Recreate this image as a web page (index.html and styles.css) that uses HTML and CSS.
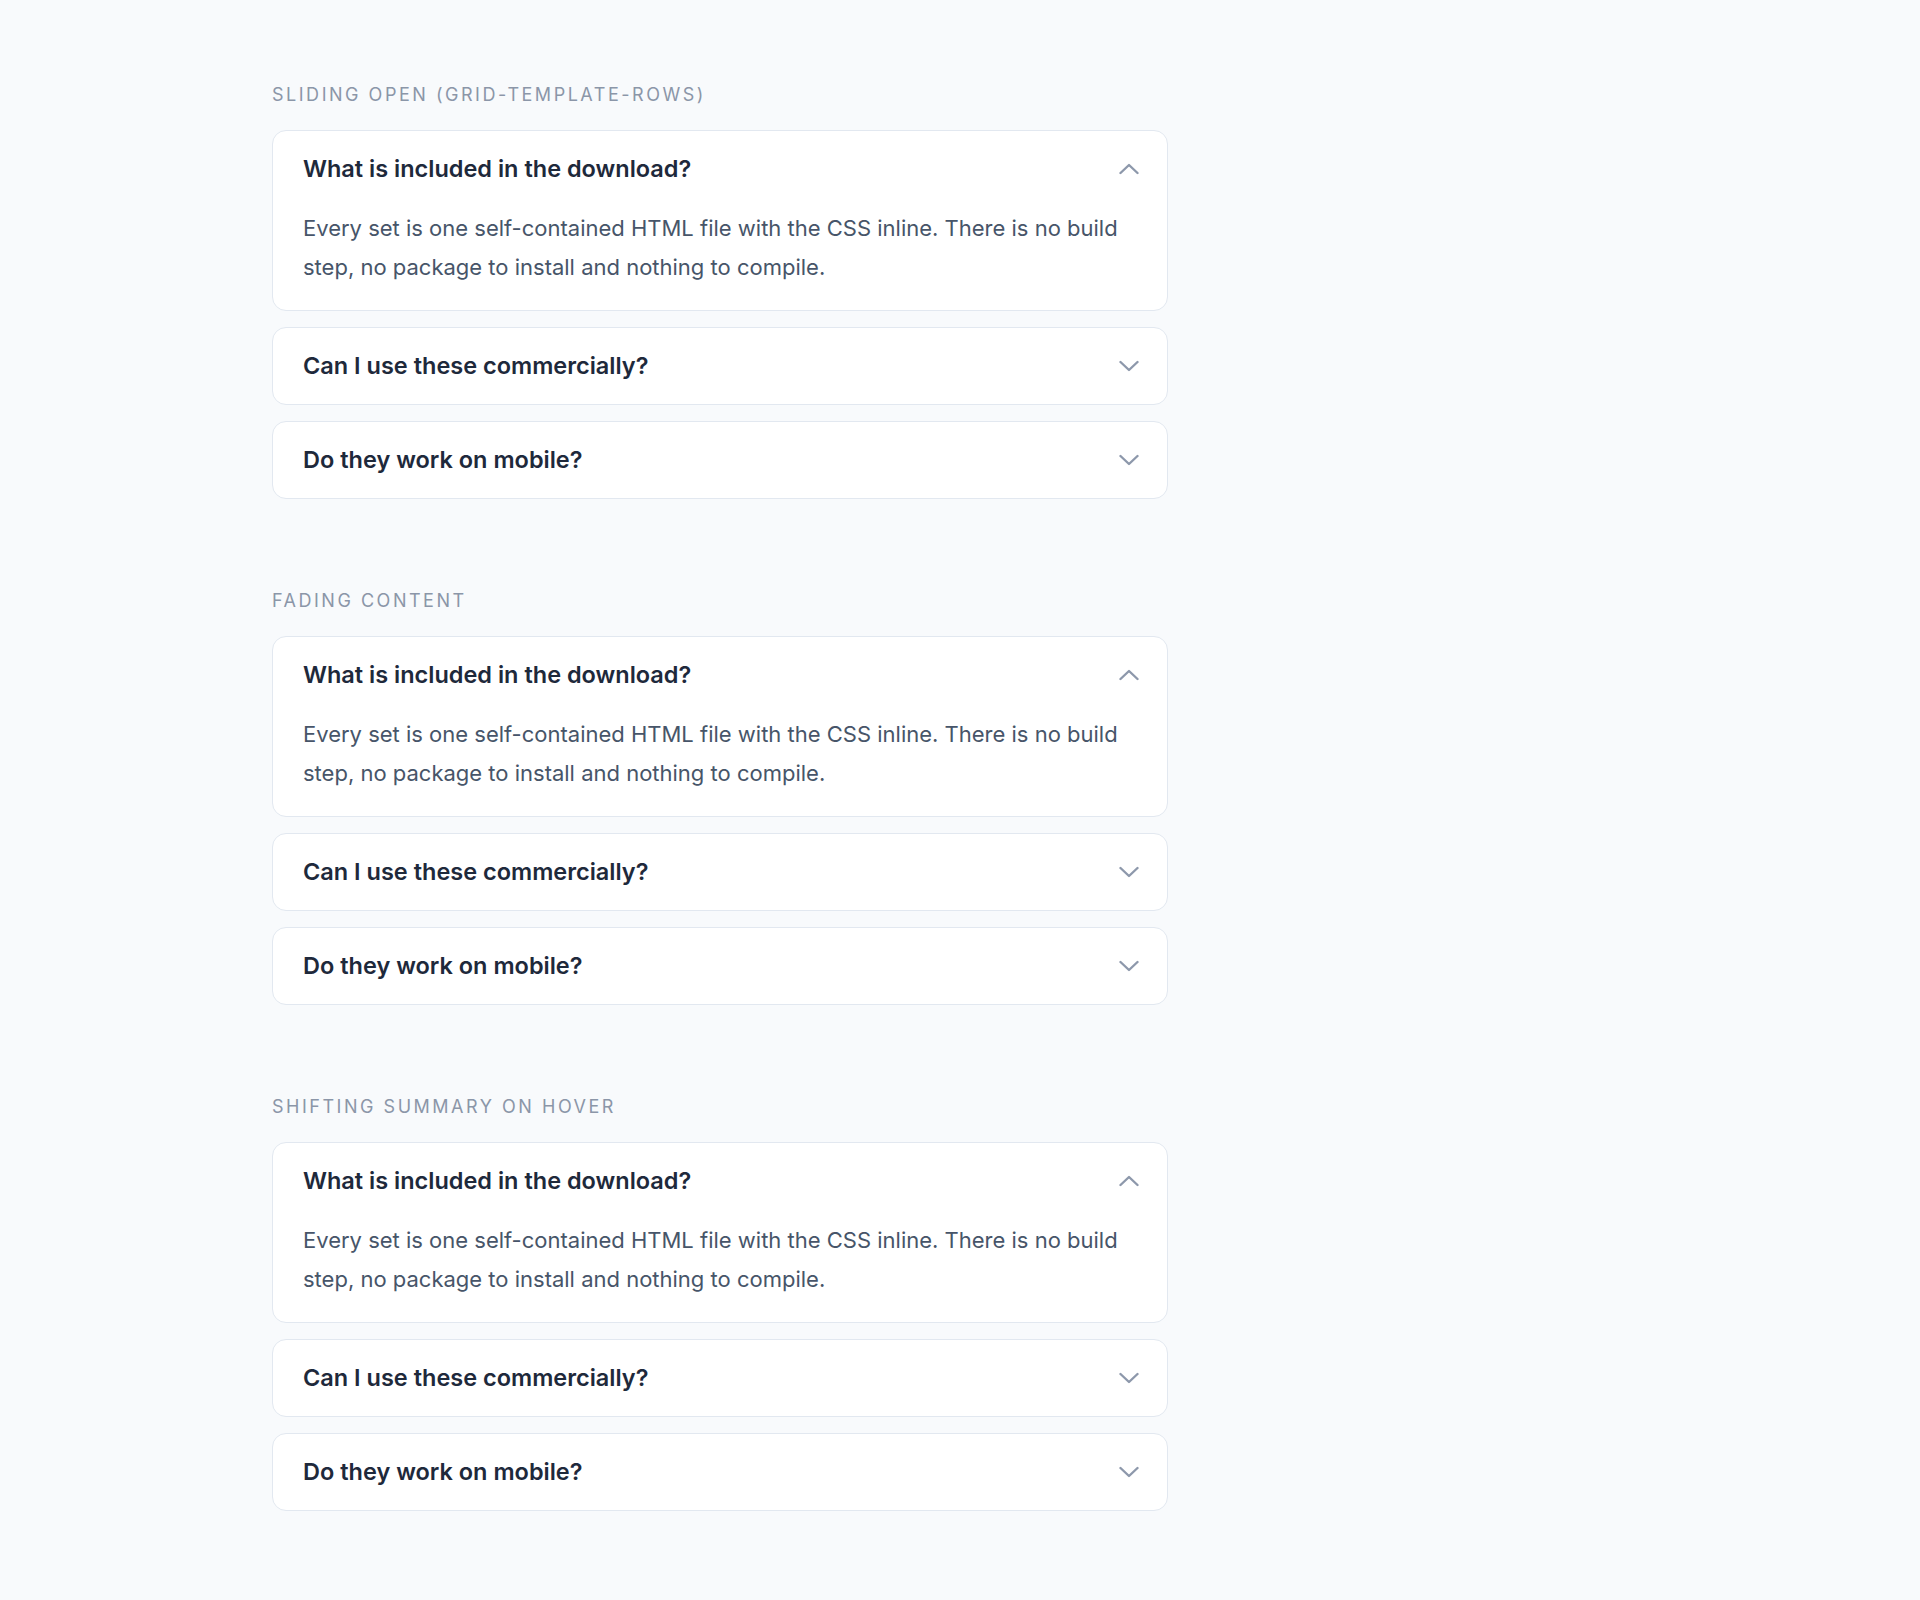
FILE: index.html
```html
<!DOCTYPE html>
<html lang="en">
<head>
    <meta charset="UTF-8">
    <meta name="viewport" content="width=device-width, initial-scale=1.0">
    <title>Accordion variants</title>
    <link rel="stylesheet" href="styles.css">
</head>
<body>

    <main class="page">

        <section class="variant">
            <h2 class="variant-label">Sliding open (grid-template-rows)</h2>
            <div class="faq">
                <details class="faq-item" open>
                    <summary>What is included in the download?
                        <svg class="chevron" viewBox="0 0 20 12"><polyline points="1.5,10 10,2 18.5,10"/></svg>
                    </summary>
                    <p class="answer">Every set is one self-contained HTML file with the CSS inline. There is no build step, no package to install and nothing to compile.</p>
                </details>
                <details class="faq-item">
                    <summary>Can I use these commercially?
                        <svg class="chevron" viewBox="0 0 20 12"><polyline points="1.5,2 10,10 18.5,2"/></svg>
                    </summary>
                    <p class="answer">Yes. Use them in client work and your own products.</p>
                </details>
                <details class="faq-item">
                    <summary>Do they work on mobile?
                        <svg class="chevron" viewBox="0 0 20 12"><polyline points="1.5,2 10,10 18.5,2"/></svg>
                    </summary>
                    <p class="answer">Every component is responsive and tested on touch devices.</p>
                </details>
            </div>
        </section>

        <section class="variant">
            <h2 class="variant-label">Fading content</h2>
            <div class="faq">
                <details class="faq-item" open>
                    <summary>What is included in the download?
                        <svg class="chevron" viewBox="0 0 20 12"><polyline points="1.5,10 10,2 18.5,10"/></svg>
                    </summary>
                    <p class="answer">Every set is one self-contained HTML file with the CSS inline. There is no build step, no package to install and nothing to compile.</p>
                </details>
                <details class="faq-item">
                    <summary>Can I use these commercially?
                        <svg class="chevron" viewBox="0 0 20 12"><polyline points="1.5,2 10,10 18.5,2"/></svg>
                    </summary>
                    <p class="answer">Yes. Use them in client work and your own products.</p>
                </details>
                <details class="faq-item">
                    <summary>Do they work on mobile?
                        <svg class="chevron" viewBox="0 0 20 12"><polyline points="1.5,2 10,10 18.5,2"/></svg>
                    </summary>
                    <p class="answer">Every component is responsive and tested on touch devices.</p>
                </details>
            </div>
        </section>

        <section class="variant">
            <h2 class="variant-label">Shifting summary on hover</h2>
            <div class="faq">
                <details class="faq-item shift" open>
                    <summary>What is included in the download?
                        <svg class="chevron" viewBox="0 0 20 12"><polyline points="1.5,10 10,2 18.5,10"/></svg>
                    </summary>
                    <p class="answer">Every set is one self-contained HTML file with the CSS inline. There is no build step, no package to install and nothing to compile.</p>
                </details>
                <details class="faq-item shift">
                    <summary>Can I use these commercially?
                        <svg class="chevron" viewBox="0 0 20 12"><polyline points="1.5,2 10,10 18.5,2"/></svg>
                    </summary>
                    <p class="answer">Yes. Use them in client work and your own products.</p>
                </details>
                <details class="faq-item shift">
                    <summary>Do they work on mobile?
                        <svg class="chevron" viewBox="0 0 20 12"><polyline points="1.5,2 10,10 18.5,2"/></svg>
                    </summary>
                    <p class="answer">Every component is responsive and tested on touch devices.</p>
                </details>
            </div>
        </section>

    </main>

</body>
</html>
```

FILE: styles.css
```css
body {
    font-family: Inter, "Liberation Sans", sans-serif;
    color: #1e293b;
    background-color: #f8fafc;
    margin: 0;
}
.page {
    max-width: 1376px;
    margin: 0 auto;
    padding: 83px 0 80px;
}
.variant {
    max-width: 896px;
    margin-bottom: 90px;
}
.variant:last-child {
    margin-bottom: 0;
}
.variant-label {
    font-size: 18px;
    font-weight: 400;
    line-height: 24px;
    letter-spacing: 0.14em;
    text-transform: uppercase;
    color: #8b96a8;
    margin: 0 0 23px;
}
.faq {
    display: flex;
    flex-direction: column;
    gap: 16px;
}
.faq-item {
    background-color: white;
    border: 1px solid #e2e8f0;
    border-radius: 14px;
}
.faq-item summary {
    list-style: none;
    display: flex;
    align-items: center;
    justify-content: space-between;
    padding: 23px 28px 23px 30px;
    font-size: 23.5px;
    font-weight: 600;
    line-height: 30px;
    color: #1e293b;
    cursor: pointer;
}
.faq-item summary::-webkit-details-marker {
    display: none;
}
.faq-item.shift summary {
    transition: padding-left 0.2s;
}
.faq-item.shift summary:hover {
    padding-left: 36px;
}
.chevron {
    width: 20px;
    height: 12px;
    fill: none;
    stroke: #8d98ab;
    stroke-width: 2.4;
    stroke-linecap: round;
    stroke-linejoin: round;
}
.answer {
    margin: 0;
    padding: 2px 30px 23px;
    font-size: 22px;
    line-height: 39px;
    color: #475569;
}
```
